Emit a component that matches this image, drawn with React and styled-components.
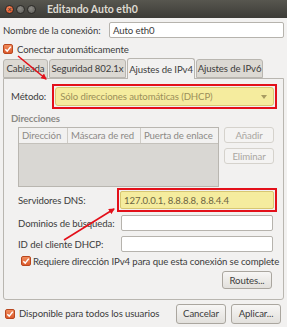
import React from 'react'
import styled, { createGlobalStyle } from 'styled-components'

const GlobalStyle = createGlobalStyle`
  html, body { margin: 0; padding: 0; }
  body {
    background: #f2f1f0;
    font-family: Lato, "DejaVu Sans", sans-serif;
    font-size: 9.6px;
    letter-spacing: -0.1px;
    color: #3c3c3c;
    white-space: nowrap;
  }
`

const Window = styled.div`
  position: relative;
  width: 287px;
  height: 327px;
  background: #f2f1f0;
  display: flex;
  flex-direction: column;
  overflow: hidden;
`

const TitleBar = styled.div`
  height: 18px;
  background: linear-gradient(#57564f, #3c3b37);
  display: flex;
  align-items: center;
  padding-left: 5px;
  gap: 2px;
`

const Dot = styled.div`
  box-sizing: border-box;
  width: 9px;
  height: 9px;
  border-radius: 50%;
  background: ${p => p.$close ? 'radial-gradient(circle at 40% 35%, #f58c5f, #d9461e)' : 'radial-gradient(circle at 40% 35%, #8c8b86, #5c5b56)'};
  border: 1px solid #2b2a27;
  display: flex;
  align-items: center;
  justify-content: center;
  color: #3c3b37;
  font-size: 7px;
  line-height: 1;
  font-weight: bold;
`

const Title = styled.div`
  margin-left: 9px;
  color: #dfdbd2;
  font-weight: bold;
  font-size: 10.5px;
  letter-spacing: 0;
`

const Body = styled.div`
  flex: 1;
  display: flex;
  flex-direction: column;
  padding: 4px 3px 0 3px;
`

const NameRow = styled.div`
  display: flex;
  align-items: center;
  justify-content: space-between;
  height: 16px;
`

const TextInput = styled.div`
  box-sizing: border-box;
  width: ${p => p.$w || 152}px;
  height: ${p => p.$h || 16}px;
  background: ${p => p.$yellow ? '#f5ec9e' : '#fff'};
  border: 1px solid ${p => p.$yellow ? '#d7c772' : '#b6b3ad'};
  border-radius: 2px;
  display: flex;
  align-items: center;
  padding-left: 3px;
  color: ${p => p.$yellow ? '#6d6542' : '#3c3c3c'};
`

const CheckRow = styled.div`
  display: flex;
  align-items: center;
  gap: ${p => p.$gap || 4}px;
  height: ${p => p.$h || 12}px;
  margin-top: ${p => p.$mt || 0}px;
  padding-left: ${p => p.$pl || 0}px;
`

const Box = styled.div`
  box-sizing: border-box;
  width: 10px;
  height: 10px;
  border-radius: 2px;
  background: linear-gradient(#f08c5c, #dc5a2c);
  border: 1px solid #b9471f;
  display: flex;
  align-items: center;
  justify-content: center;
  flex-shrink: 0;
`

const Check = () => (
  <Box>
    <svg width="8" height="8" viewBox="0 0 8 8">
      <path d="M1.3 4.2 L3.2 6.1 L6.8 1.6" stroke="#fff" strokeWidth="1.5" fill="none" />
    </svg>
  </Box>
)

const Tabs = styled.div`
  display: flex;
  align-items: flex-end;
  gap: 1px;
  height: 21px;
  margin-top: 2px;
`

const Tab = styled.div`
  box-sizing: border-box;
  width: ${p => p.$w}px;
  height: ${p => p.$active ? 21 : 19}px;
  background: ${p => p.$active ? '#f2f1f0' : '#dcd9d3'};
  border: 1px solid #b9b6b0;
  border-bottom: ${p => p.$active ? 'none' : '1px solid #b9b6b0'};
  border-radius: 3px 3px 0 0;
  display: flex;
  align-items: center;
  justify-content: center;
  color: #3c3c3c;
  margin-bottom: ${p => p.$active ? -1 : 0}px;
  position: relative;
  z-index: ${p => p.$active ? 1 : 0};
`

const Panel = styled.div`
  box-sizing: border-box;
  height: 222px;
  border: 1px solid #b9b6b0;
  border-radius: 0 0 3px 3px;
  padding: 5px 6px 0 7px;
  display: flex;
  flex-direction: column;
`

const MethodRow = styled.div`
  display: flex;
  align-items: center;
  gap: 6px;
`

const RedFrame = styled.div`
  box-sizing: border-box;
  border: 2px solid #e3101a;
  padding: 1px;
  width: ${p => p.$w}px;
`

const Combo = styled.div`
  box-sizing: border-box;
  height: 19px;
  background: #f5ec9e;
  border: 1px solid #d8c874;
  border-radius: 3px;
  display: flex;
  align-items: center;
  justify-content: space-between;
  padding: 0 6px 0 4px;
  color: #9b8f5a;
`

const Section = styled.div`
  margin-top: 4px;
  font-weight: bold;
  color: #8c8a86;
`

const AddrRow = styled.div`
  display: flex;
  gap: 5px;
  margin-top: 3px;
  padding-left: 7px;
`

const Table = styled.div`
  box-sizing: border-box;
  width: 201px;
  height: 60px;
  border: 1px solid #b9b6b0;
  background: #d9d7d3;
  display: flex;
  flex-direction: column;
`

const THead = styled.div`
  display: flex;
  height: 15px;
  background: #f2f1f0;
  border-bottom: 1px solid #c4c1bb;
`

const Th = styled.div`
  box-sizing: border-box;
  width: ${p => p.$w}px;
  padding-left: 3px;
  border-right: ${p => p.$last ? 'none' : '1px solid #cfccc6'};
  color: #8c8a86;
  display: flex;
  align-items: center;
  overflow: hidden;
`

const Side = styled.div`
  display: flex;
  flex-direction: column;
  gap: 5px;
`

const Button = styled.div`
  box-sizing: border-box;
  width: ${p => p.$w || 50}px;
  height: ${p => p.$h || 16}px;
  border: 1px solid ${p => p.$disabled ? '#d5d2cc' : '#aaa69f'};
  border-radius: 3px;
  background: ${p => p.$disabled ? '#f4f3f2' : 'linear-gradient(#f7f6f5, #e2e0dc)'};
  color: ${p => p.$disabled ? '#a9a6a1' : '#3c3c3c'};
  display: flex;
  align-items: center;
  justify-content: center;
`

const Fields = styled.div`
  display: grid;
  grid-template-columns: 99px 160px;
  align-items: center;
  padding-left: 7px;
  margin-top: 1px;
  row-gap: 1px;
`

const Label = styled.div`
  color: #3c3c3c;
  height: ${p => p.$h || 20}px;
  display: flex;
  align-items: center;
`

const Slot = styled.div`
  height: ${p => p.$h || 20}px;
  display: flex;
  align-items: center;
  padding-left: ${p => p.$pl || 0}px;
`

const RoutesRow = styled.div`
  display: flex;
  justify-content: flex-end;
  margin-top: 4px;
  padding-right: 5px;
`

const Footer = styled.div`
  flex: 1;
  display: flex;
  align-items: center;
  justify-content: space-between;
  padding: 0 3px 0 2px;
`

const Buttons = styled.div`
  display: flex;
  gap: 5px;
`

const Overlay = styled.svg`
  position: absolute;
  left: 0;
  top: 0;
  pointer-events: none;
`

export default function App() {
  return (
    <>
      <GlobalStyle />
      <Window>
        <TitleBar>
          <Dot $close>×</Dot>
          <Dot />
          <Dot />
          <Title>Editando Auto eth0</Title>
        </TitleBar>
        <Body>
          <NameRow>
            <span>Nombre de la conexión:</span>
            <TextInput $w={175}>Auto eth0</TextInput>
          </NameRow>
          <CheckRow $mt={5}>
            <Check />
            <span>Conectar automáticamente</span>
          </CheckRow>
          <Tabs>
            <Tab $w={45}>Cableada</Tab>
            <Tab $w={77}>Seguridad 802.1x</Tab>
            <Tab $w={68} $active>Ajustes de IPv4</Tab>
            <Tab $w={67}>Ajustes de IPv6</Tab>
          </Tabs>
          <Panel>
            <MethodRow>
              <span>Método:</span>
              <RedFrame $w={228}>
                <Combo>
                  <span>Sólo direcciones automáticas (DHCP)</span>
                  <svg width="6" height="4" viewBox="0 0 6 4">
                    <path d="M0 0 L6 0 L3 4 Z" fill="#a89c62" />
                  </svg>
                </Combo>
              </RedFrame>
            </MethodRow>
            <Section>Direcciones</Section>
            <AddrRow>
              <Table>
                <THead>
                  <Th $w={49}>Dirección</Th>
                  <Th $w={73}>Máscara de red</Th>
                  <Th $w={77} $last>Puerta de enlace</Th>
                </THead>
              </Table>
              <Side>
                <Button $disabled>Añadir</Button>
                <Button $disabled>Eliminar</Button>
              </Side>
            </AddrRow>
            <Fields>
              <Label $h={24}>Servidores DNS:</Label>
              <Slot $h={24}>
                <RedFrame $w={160}>
                  <TextInput $w={154} $h={18} $yellow>127.0.0.1, 8.8.8.8, 8.8.4.4</TextInput>
                </RedFrame>
              </Slot>
              <Label>Dominios de búsqueda:</Label>
              <Slot $pl={4}><TextInput /></Slot>
              <Label>ID del cliente DHCP:</Label>
              <Slot $pl={4}><TextInput /></Slot>
            </Fields>
            <CheckRow $pl={10} $mt={1} $gap={2}>
              <Check />
              <span>Requiere dirección IPv4 para que esta conexión se complete</span>
            </CheckRow>
            <RoutesRow>
              <Button $h={18}>Routes...</Button>
            </RoutesRow>
          </Panel>
          <Footer>
            <CheckRow>
              <Check />
              <span>Disponible para todos los usuarios</span>
            </CheckRow>
            <Buttons>
              <Button $h={20}>Cancelar</Button>
              <Button $h={20}>Aplicar...</Button>
            </Buttons>
          </Footer>
        </Body>
        <Overlay width="287" height="327" viewBox="0 0 287 327">
          <defs>
            <marker id="ah" markerWidth="6" markerHeight="6" refX="5" refY="3" orient="auto" markerUnits="userSpaceOnUse">
              <path d="M0 0 L6 3 L0 6 Z" fill="#e3101a" />
            </marker>
          </defs>
          <line x1="18" y1="56" x2="46" y2="79" stroke="#e3101a" strokeWidth="1.6" markerEnd="url(#ah)" />
          <line x1="64" y1="240" x2="114" y2="209" stroke="#e3101a" strokeWidth="1.6" markerEnd="url(#ah)" />
        </Overlay>
      </Window>
    </>
  )
}
